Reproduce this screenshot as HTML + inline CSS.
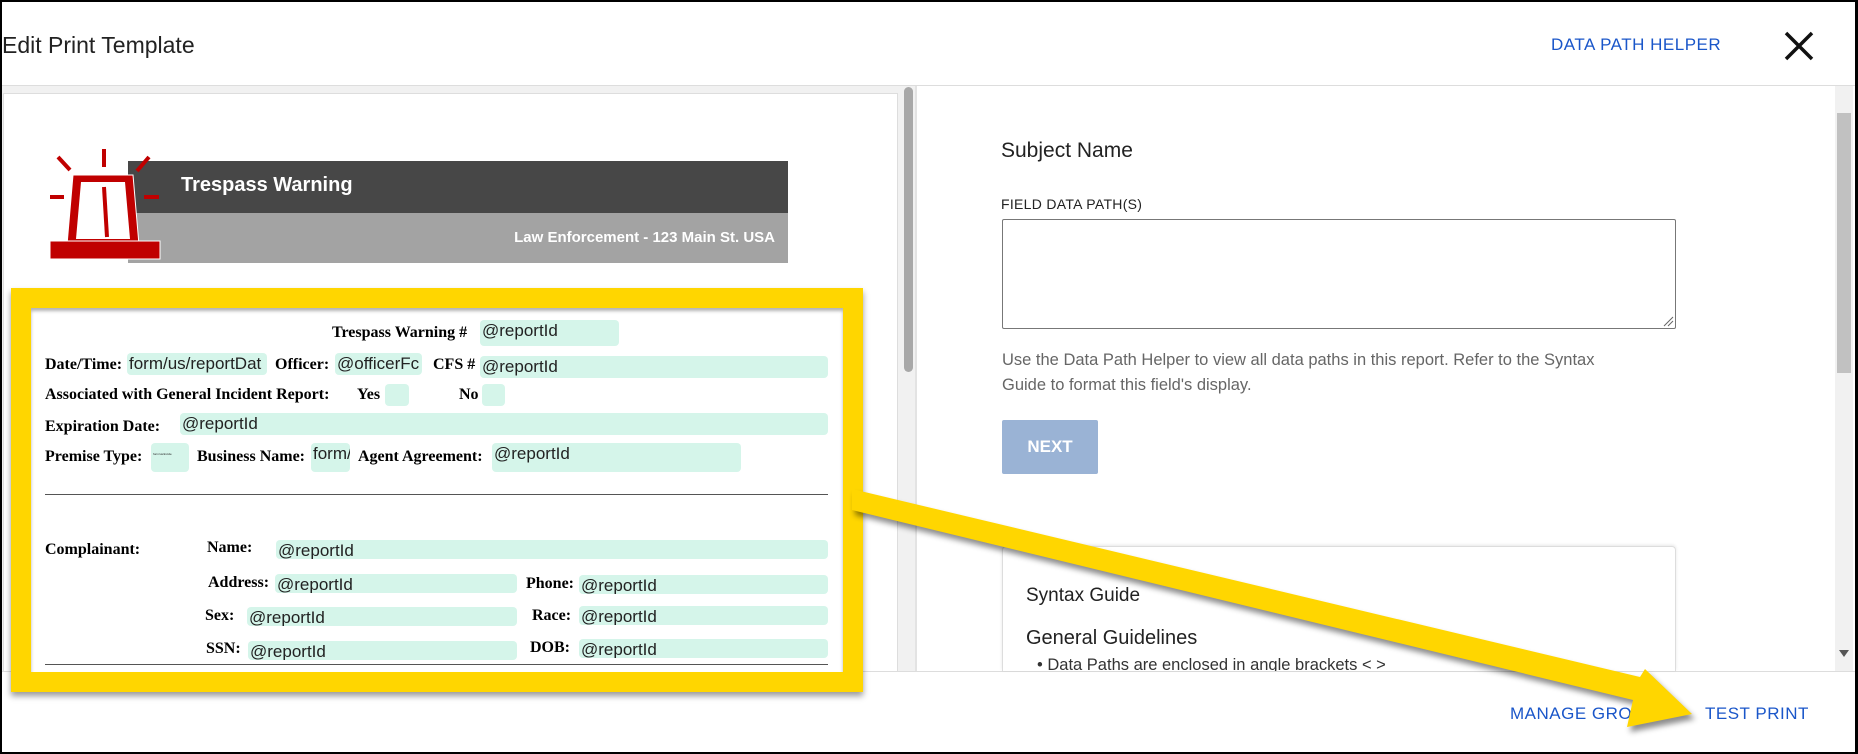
<!DOCTYPE html>
<html><head><meta charset="utf-8"><style>
*{margin:0;padding:0;box-sizing:border-box}
body{width:1858px;height:754px;overflow:hidden;background:#fff;font-family:"Liberation Sans",sans-serif;position:relative}
.a{position:absolute;white-space:nowrap}
.s{font-family:"Liberation Serif",serif;font-weight:bold;font-size:16px;color:#000}
.f{position:absolute;background:#d5f5ea;border-radius:4px;height:22px;font-family:"Liberation Sans",sans-serif;font-size:17px;color:#222;overflow:hidden;white-space:nowrap;padding-left:2px;line-height:22px}
</style></head><body>
<div class="a" style="left:0;top:0;width:1858px;height:754px;border:2px solid #000;border-right-width:3px;z-index:20;pointer-events:none"></div>
<div class="a" style="left:0;top:671px;width:1858px;height:83px;background:#fff;border-top:1px solid #ddd"></div>
<div class="a" style="left:1510px;top:704px;font-size:17px;color:#1a56c9;font-weight:500;letter-spacing:.5px">MANAGE GROUPS</div>
<div class="a" style="left:1705px;top:704px;font-size:17px;color:#1a56c9;font-weight:500;letter-spacing:.5px">TEST PRINT</div>
<div class="a" style="left:2px;top:32px;font-size:23px;color:#222">Edit Print Template</div>
<div class="a" style="left:1551px;top:35px;font-size:17px;color:#1a56c9;font-weight:500;letter-spacing:.5px">DATA PATH HELPER</div>
<svg class="a" style="left:1783px;top:30px" width="32" height="32"><path d="M3 3L29 29M29 3L3 29" stroke="#111" stroke-width="3.5"/></svg>
<div class="a" style="left:0;top:85px;width:1858px;height:1px;background:#ddd"></div>
<!-- left pane -->
<div class="a" style="left:0;top:86px;width:903px;height:585px;background:#f1f1f1"></div>
<div class="a" style="left:3px;top:93px;width:895px;height:578px;background:#fff;border:1px solid #ddd;border-bottom:none"></div>
<div class="a" style="left:903px;top:86px;width:12px;height:585px;background:#f1f1f1"></div>
<div class="a" style="left:904px;top:87px;width:9px;height:285px;background:#a8a8a8;border-radius:5px"></div>
<div class="a" style="left:915px;top:86px;width:2px;height:585px;background:#e3e3e3"></div>
<!-- logo -->
<div class="a" style="left:128px;top:161px;width:660px;height:52px;background:#474747"></div>
<div class="a" style="left:128px;top:213px;width:660px;height:50px;background:#a3a3a3"></div>
<div class="a" style="left:181px;top:174px;font-size:20px;color:#fff;font-weight:bold">Trespass Warning</div>
<div class="a" style="left:482px;top:229px;font-size:15px;color:#fff;font-weight:bold;width:293px;text-align:right">Law Enforcement - 123 Main St. USA</div>
<svg class="a" style="left:45px;top:145px" width="120" height="120">
<g fill="#c00000" stroke="#fff" stroke-width="1">
<path d="M28 30 L88 30 L94 100 L22 100 Z"/>
<rect x="5" y="96" width="110" height="18"/>
</g>
<path d="M36 37 L80 37 L85 94 L31 94 Z" fill="#fff"/>
<path d="M59 42 L62 92" stroke="#c00000" stroke-width="4"/>
<g stroke="#c00000" stroke-width="4">
<path d="M13 12L25 25M59 4V22M104 12L92 26M5 52H19M99 52H114"/></g>
</svg>
<!-- yellow box -->
<div class="a" style="left:11px;top:288px;width:852px;height:404px;background:#ffd600;box-shadow:0 4px 6px rgba(0,0,0,.4)"></div>
<div class="a" style="left:31px;top:308px;width:812px;height:364px;background:#fff;box-shadow:inset 0 3px 3px rgba(0,0,0,.3)"></div>
<div class="a s" style="left:332px;top:324px">Trespass Warning #</div>
<div class="f" style="left:480px;top:320px;width:139px;height:26px">@reportId</div>
<div class="a s" style="left:45px;top:356px">Date/Time:</div>
<div class="f" style="left:127px;top:353px;width:140px">form/us/reportDat</div>
<div class="a s" style="left:275px;top:356px">Officer:</div>
<div class="f" style="left:335px;top:353px;width:87px">@officerFc</div>
<div class="a s" style="left:433px;top:356px">CFS #</div>
<div class="f" style="left:480px;top:356px;width:348px">@reportId</div>
<div class="a s" style="left:45px;top:386px">Associated with General Incident Report:</div>
<div class="a s" style="left:357px;top:386px">Yes</div>
<div class="f" style="left:385px;top:384px;width:24px"></div>
<div class="a s" style="left:459px;top:386px">No</div>
<div class="f" style="left:482px;top:384px;width:23px"></div>
<div class="a s" style="left:45px;top:418px">Expiration Date:</div>
<div class="f" style="left:180px;top:413px;width:648px">@reportId</div>
<div class="a s" style="left:45px;top:448px">Premise Type:</div>
<div class="f" style="left:151px;top:443px;width:38px;height:29px;font-size:3px">form/us/incide</div>
<div class="a s" style="left:197px;top:448px">Business Name:</div>
<div class="f" style="left:311px;top:443px;width:39px;height:29px">form/</div>
<div class="a s" style="left:358px;top:448px">Agent Agreement:</div>
<div class="f" style="left:492px;top:443px;width:249px;height:29px">@reportId</div>
<div class="a" style="left:45px;top:494px;width:783px;height:1px;background:#555"></div>
<div class="a s" style="left:45px;top:541px">Complainant:</div>
<div class="a s" style="left:207px;top:539px">Name:</div>
<div class="f" style="left:276px;top:540px;width:552px;height:19px">@reportId</div>
<div class="a s" style="left:208px;top:574px">Address:</div>
<div class="f" style="left:275px;top:574px;width:242px;height:19px">@reportId</div>
<div class="a s" style="left:526px;top:575px">Phone:</div>
<div class="f" style="left:579px;top:575px;width:249px;height:19px">@reportId</div>
<div class="a s" style="left:205px;top:607px">Sex:</div>
<div class="f" style="left:247px;top:607px;width:270px;height:19px">@reportId</div>
<div class="a s" style="left:532px;top:607px">Race:</div>
<div class="f" style="left:579px;top:606px;width:249px;height:19px">@reportId</div>
<div class="a s" style="left:206px;top:640px">SSN:</div>
<div class="f" style="left:248px;top:641px;width:269px;height:19px">@reportId</div>
<div class="a s" style="left:530px;top:639px">DOB:</div>
<div class="f" style="left:579px;top:639px;width:249px;height:19px">@reportId</div>
<div class="a" style="left:45px;top:664px;width:783px;height:1px;background:#555"></div>
<!-- right pane -->
<div class="a" style="left:1001px;top:139px;font-size:21px;color:#222">Subject Name</div>
<div class="a" style="left:1001px;top:196px;font-size:14px;color:#222;letter-spacing:.3px">FIELD DATA PATH(S)</div>
<div class="a" style="left:1002px;top:219px;width:674px;height:110px;border:1px solid #777;border-radius:2px"></div>
<svg class="a" style="left:1662px;top:315px" width="12" height="12"><path d="M2 11L11 2M6 11L11 6" stroke="#666"/></svg>
<div class="a" style="left:1002px;top:348px;font-size:16.5px;color:#666;line-height:25px">Use the Data Path Helper to view all data paths in this report. Refer to the Syntax<br>Guide to format this field's display.</div>
<div class="a" style="left:1002px;top:420px;width:96px;height:54px;background:#9ab3d5;border-radius:2px;color:#fff;font-size:17px;font-weight:bold;text-align:center;line-height:54px">NEXT</div>
<div class="a" style="left:1002px;top:546px;width:674px;height:125px;border:1px solid #ddd;border-bottom:none;border-radius:4px 4px 0 0;box-shadow:0 -1px 3px rgba(0,0,0,.1)"></div>
<div class="a" style="left:1026px;top:585px;font-size:19px;color:#222">Syntax Guide</div>
<div class="a" style="left:1026px;top:627px;font-size:20px;color:#222;font-weight:500">General Guidelines</div>
<div class="a" style="left:1037px;top:656px;font-size:16.5px;color:#333;height:15px;overflow:hidden">• Data Paths are enclosed in angle brackets &lt; &gt;</div>
<div class="a" style="left:1835px;top:86px;width:18px;height:585px;background:#f1f1f1"></div>
<div class="a" style="left:1837px;top:113px;width:14px;height:260px;background:#c1c1c1"></div>
<svg class="a" style="left:1839px;top:650px" width="10" height="8"><path d="M0 0H10L5 7Z" fill="#555"/></svg>
<!-- arrow -->
<svg class="a" style="left:0;top:0;filter:drop-shadow(3px 5px 3px rgba(0,0,0,.45))" width="1858" height="754">
<path d="M852 489 L1640 677 L1645 669 L1692 714 L1627 727 L1633 700 L852 510 Z" fill="#ffd600"/>
</svg>
</body></html>
